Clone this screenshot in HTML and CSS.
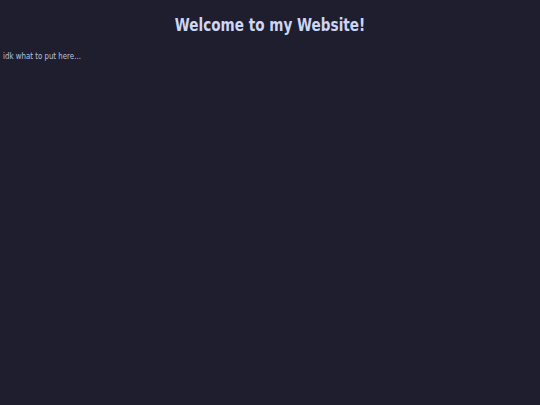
FILE: index.html
```html
<!DOCTYPE html>
<html>
<head>
<meta charset="utf-8">
<link rel="stylesheet" href="styles.css">
</head>
<body>
<h1 class="title"><span class="title-text">Welcome to my Website!</span></h1>
<p class="note"><span class="note-text">idk what to put here...</span></p>
</body>
</html>
```
FILE: styles.css
```css
html, body {
  margin: 0;
  background: #1e1e2e;
  height: 100%;
}
body {
  font-family: "DejaVu Sans", sans-serif;
  color: #cdd6f4;
  padding: 0 3px;
}
.title {
  margin: 0;
  padding-top: 14px;
  text-align: center;
  font-size: 17px;
  font-weight: bold;
  color: #cdd6f4;
  line-height: 22px;
}
.title-text {
  display: inline-block;
  transform: scaleX(0.8);
  transform-origin: center;
}
.note {
  margin: 14px 0 0;
  font-size: 9px;
  line-height: 12px;
  color: #bac2de;
}
.note-text {
  display: inline-block;
  transform: scaleX(0.78);
  transform-origin: left;
}
```
